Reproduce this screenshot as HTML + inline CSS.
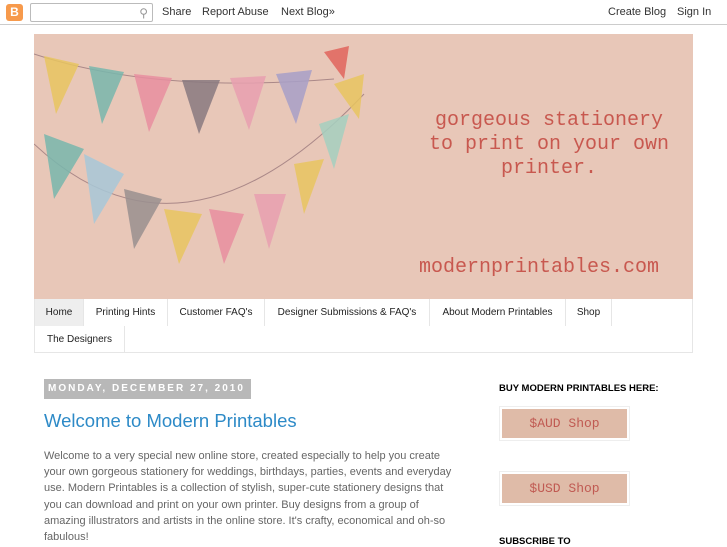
<!DOCTYPE html>
<html><head><meta charset="utf-8"><style>
*{margin:0;padding:0;box-sizing:border-box}
body{width:727px;height:545px;overflow:hidden;background:#fff;font-family:"Liberation Sans",sans-serif;position:relative}
.nb{position:absolute;left:0;top:0;width:727px;height:25px;border-bottom:1px solid #ccc;background:#fff;font-size:11px;color:#333}
.nb span{position:absolute;top:6px}
.hdr{position:absolute;left:34px;top:34px;width:659px;height:265px;background:#e8c7b8;overflow:hidden}
.ht{position:absolute;font-family:"Liberation Mono",monospace;color:#c8584f;font-size:20px;text-align:center;line-height:24px}
.tabs{position:absolute;left:34px;top:299px;width:659px;height:54px;border:1px solid #e6e6e6;border-top:none;background:#fff;font-size:10px;color:#222}
.tab{position:absolute;height:27px;line-height:28px;border-right:1px solid #e6e6e6;text-align:center}
.date{position:absolute;left:44px;top:379px;width:207px;height:20px;background:#b8b8b8;color:#fff;font-size:10px;font-weight:bold;letter-spacing:2px;line-height:20px;padding-left:4px}
h1{position:absolute;left:44px;top:410px;font-weight:normal;font-size:18.5px;color:#2d8ac7}
.p{position:absolute;left:44px;top:448px;width:418px;font-size:11px;line-height:16.2px;color:#666}
.sb{position:absolute;left:499px;font-size:9.5px;font-weight:bold;color:#000}
.btn{position:absolute;left:499px;width:131px;height:35px;border:1px solid #eee;padding:2px}
.btn div{background:#dfbba8;height:29px;font-family:"Liberation Mono",monospace;color:#c05a52;font-size:13px;text-align:center;line-height:29px}
</style></head><body>
<div class="nb">
<div style="position:absolute;left:6px;top:4px;width:17px;height:17px;background:#f79a4c;border-radius:3px;color:#fff;font-weight:bold;font-size:12px;text-align:center;line-height:17px">B</div>
<div style="position:absolute;left:30px;top:3px;width:123px;height:19px;border:1px solid #bbb;border-radius:2px"><span style="right:4px;top:2px;color:#999;font-size:12px">&#9906;</span></div>
<span style="left:162px">Share</span><span style="left:202px">Report Abuse</span><span style="left:281px">Next Blog»</span>
<span style="left:608px">Create Blog</span><span style="left:677px">Sign In</span>
</div>
<div class="hdr">
<svg width="659" height="265" style="position:absolute;left:0;top:0">
<path d="M0 20 Q120 60 300 45" stroke="#a88" fill="none"/>
<path d="M0 110 Q150 250 330 60" stroke="#a88" fill="none"/>
<g opacity="0.85">
<polygon points="10,22 45,30 22,80" fill="#e8c560"/>
<polygon points="55,32 90,38 68,90" fill="#79b7ad"/>
<polygon points="100,40 138,44 115,98" fill="#e88fa0"/>
<polygon points="148,46 186,46 165,100" fill="#8a7a80"/>
<polygon points="196,44 232,42 215,96" fill="#e8a0b0"/>
<polygon points="242,40 278,36 262,90" fill="#a8a0c8"/>
<polygon points="290,18 315,12 310,45" fill="#e2655d"/>
<polygon points="300,50 330,40 325,85" fill="#e8c560"/>
<polygon points="285,90 315,80 300,135" fill="#a6d0c0"/>
<polygon points="260,130 290,125 270,180" fill="#e8c560"/>
<polygon points="220,160 252,160 235,215" fill="#e8a0b0"/>
<polygon points="175,175 210,180 190,230" fill="#e88fa0"/>
<polygon points="130,175 168,180 145,230" fill="#e8c560"/>
<polygon points="90,155 128,165 100,215" fill="#9a9090"/>
<polygon points="50,120 90,140 60,190" fill="#a8c8d8"/>
<polygon points="10,100 50,115 20,165" fill="#79b7ad"/>
</g></svg>
<div class="ht" style="left:380px;top:75px;width:270px">gorgeous stationery<br>to print on your own<br>printer.</div>
<div class="ht" style="left:385px;top:222px">modernprintables.com</div>
</div>
<div class="tabs">
<div class="tab" style="left:0;width:49px;background:#eee">Home</div>
<div class="tab" style="left:49px;width:84px">Printing Hints</div>
<div class="tab" style="left:133px;width:97px">Customer FAQ's</div>
<div class="tab" style="left:230px;width:165px">Designer Submissions &amp; FAQ's</div>
<div class="tab" style="left:395px;width:136px">About Modern Printables</div>
<div class="tab" style="left:531px;width:46px">Shop</div>
<div class="tab" style="left:0;top:27px;width:90px">The Designers</div>
</div>
<div class="date">MONDAY, DECEMBER 27, 2010</div>
<h1>Welcome to Modern Printables</h1>
<div class="p">Welcome to a very special new online store, created especially to help you create your own gorgeous stationery for weddings, birthdays, parties, events and everyday use. Modern Printables is a collection of stylish, super-cute stationery designs that you can download and print on your own printer. Buy designs from a group of amazing illustrators and artists in the online store. It's crafty, economical and oh-so fabulous!</div>
<div class="sb" style="top:383px">BUY MODERN PRINTABLES HERE:</div>
<div class="btn" style="top:406px"><div>$AUD Shop</div></div>
<div class="btn" style="top:471px"><div>$USD Shop</div></div>
<div class="sb" style="top:536px">SUBSCRIBE TO</div>
</body></html>
